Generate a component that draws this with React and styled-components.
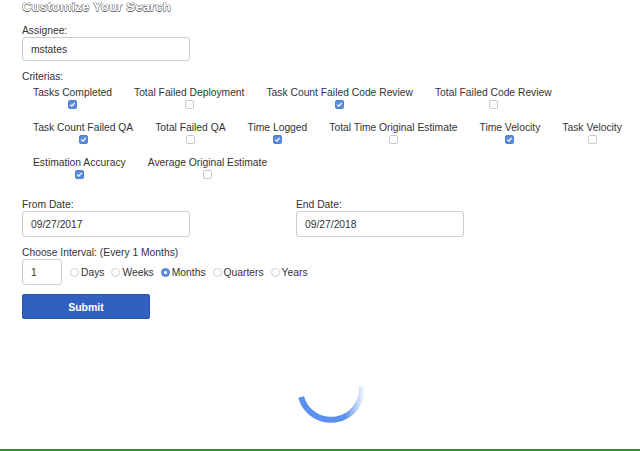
import React from 'react';
import styled, { createGlobalStyle } from 'styled-components';

const GlobalStyle = createGlobalStyle`
  html, body {
    margin: 0;
    padding: 0;
    background: #fff;
  }
  body {
    font-family: "Liberation Sans", Arial, sans-serif;
    color: #333;
  }
`;

const Page = styled.div`
  box-sizing: border-box;
  height: 451px;
  padding: 0 0 0 22px;
  border-bottom: 2px solid #2e8b2e;
  overflow: hidden;
`;
const Heading = styled.h1`
  margin: -1px 0 0;
  font-size: 13px;
  line-height: 16px;
  font-weight: bold;
  color: #fff;
  text-shadow: -0.5px 0 #666, 0.5px 0 #666, 0 -0.5px #666, 0 0.5px #666;
  letter-spacing: 0.2px;
`;
const FieldLabel = styled.label`
  display: block;
  font-size: 10.3px;
  line-height: 13px;
  color: #333;
  margin-top: ${(p) => p.$top || 0}px;
`;
const TextInput = styled.input`
  box-sizing: border-box;
  display: block;
  width: ${(p) => p.$w || 168}px;
  height: ${(p) => p.$h || 26}px;
  padding: 0 8px;
  border: 1px solid #ccc;
  border-radius: 3px;
  font-family: inherit;
  font-size: 10.3px;
  color: #333;
  outline: none;
`;
const CriteriaGrid = styled.div`
  display: flex;
  flex-wrap: wrap;
  width: 612px;
  margin-top: 3px;
`;
const CriteriaItem = styled.div`
  display: flex;
  flex-direction: column;
  align-items: center;
  padding: 0 11px;
  margin-bottom: 12px;
`;
const CriteriaName = styled.span`
  font-size: 10.3px;
  line-height: 13px;
  white-space: nowrap;
  color: #333;
`;
const CheckBox = styled.span`
  box-sizing: border-box;
  width: 9px;
  height: 9px;
  margin-top: 1px;
  border-radius: 2px;
  border: 1px solid ${(p) => (p.$on ? '#4f7fd0' : '#c9c9c9')};
  background: ${(p) => (p.$on ? '#5c8ee0' : '#fff')};
  display: flex;
  align-items: center;
  justify-content: center;
`;
const DateRow = styled.div`
  display: grid;
  grid-template-columns: 274px 274px;
  margin-top: 7px;
`;
const IntervalRow = styled.div`
  display: flex;
  align-items: center;
`;
const RadioGroup = styled.div`
  display: flex;
  align-items: center;
  gap: 7px;
  margin-left: 8px;
`;
const RadioOption = styled.span`
  display: flex;
  align-items: center;
  gap: 2px;
  font-size: 10.3px;
  color: #333;
`;
const RadioDot = styled.span`
  box-sizing: border-box;
  width: 9px;
  height: 9px;
  border-radius: 50%;
  border: 1px solid ${(p) => (p.$on ? '#4f7fd0' : '#d0d0d0')};
  background: ${(p) => (p.$on ? '#5c8ee0' : '#fff')};
  display: flex;
  align-items: center;
  justify-content: center;
  &::after {
    content: '';
    display: ${(p) => (p.$on ? 'block' : 'none')};
    width: 3px;
    height: 3px;
    border-radius: 50%;
    background: #fff;
  }
`;
const SubmitButton = styled.button`
  display: block;
  box-sizing: border-box;
  width: 128px;
  height: 25px;
  margin-top: 9px;
  border: 1px solid #2a52a8;
  border-radius: 2px;
  background: #3060c0;
  color: #fff;
  font-family: inherit;
  font-size: 10.5px;
  font-weight: bold;
`;
const SpinnerWrap = styled.div`
  display: flex;
  justify-content: center;
  margin-top: 30px;
`;

const criteria = [
  ['Tasks Completed', true],
  ['Total Failed Deployment', false],
  ['Task Count Failed Code Review', true],
  ['Total Failed Code Review', false],
  ['Task Count Failed QA', true],
  ['Total Failed QA', false],
  ['Time Logged', true],
  ['Total Time Original Estimate', false],
  ['Time Velocity', true],
  ['Task Velocity', false],
  ['Estimation Accuracy', true],
  ['Average Original Estimate', false],
];

const intervals = ['Days', 'Weeks', 'Months', 'Quarters', 'Years'];

function Tick() {
  return (
    <svg width="7" height="7" viewBox="0 0 7 7">
      <path d="M1.2 3.6 L2.8 5.1 L5.8 1.8" fill="none" stroke="#fff" strokeWidth="1.2" />
    </svg>
  );
}

function Spinner() {
  return (
    <svg width="80" height="80" viewBox="290 348 80 80">
      <defs>
        <linearGradient id="fade" x1="296" y1="0" x2="364" y2="0" gradientUnits="userSpaceOnUse">
          <stop offset="0" stopColor="#5b8ff0" />
          <stop offset="0.7" stopColor="#5b8ff0" />
          <stop offset="1" stopColor="#5b8ff0" stopOpacity="0" />
        </linearGradient>
      </defs>
      <path d="M300.1 396 A31 31 0 0 0 360.9 385.3" fill="none" stroke="url(#fade)" strokeWidth="6" />
    </svg>
  );
}

export default function App() {
  return (
    <Page>
      <GlobalStyle />
      <Heading>Customize Your Search</Heading>

      <FieldLabel $top={9}>Assignee:</FieldLabel>
      <TextInput $h={24} defaultValue="mstates" />

      <FieldLabel $top={9}>Criterias:</FieldLabel>
      <CriteriaGrid>
        {criteria.map(([name, on]) => (
          <CriteriaItem key={name}>
            <CriteriaName>{name}</CriteriaName>
            <CheckBox $on={on}>{on && <Tick />}</CheckBox>
          </CriteriaItem>
        ))}
      </CriteriaGrid>

      <DateRow>
        <div>
          <FieldLabel>From Date:</FieldLabel>
          <TextInput defaultValue="09/27/2017" />
        </div>
        <div>
          <FieldLabel>End Date:</FieldLabel>
          <TextInput defaultValue="09/27/2018" />
        </div>
      </DateRow>

      <FieldLabel $top={9}>Choose Interval: (Every 1 Months)</FieldLabel>
      <IntervalRow>
        <TextInput $w={40} defaultValue="1" />
        <RadioGroup>
          {intervals.map((name) => (
            <RadioOption key={name}>
              <RadioDot $on={name === 'Months'} />
              {name}
            </RadioOption>
          ))}
        </RadioGroup>
      </IntervalRow>

      <SubmitButton>Submit</SubmitButton>

      <SpinnerWrap>
        <Spinner />
      </SpinnerWrap>
    </Page>
  );
}
